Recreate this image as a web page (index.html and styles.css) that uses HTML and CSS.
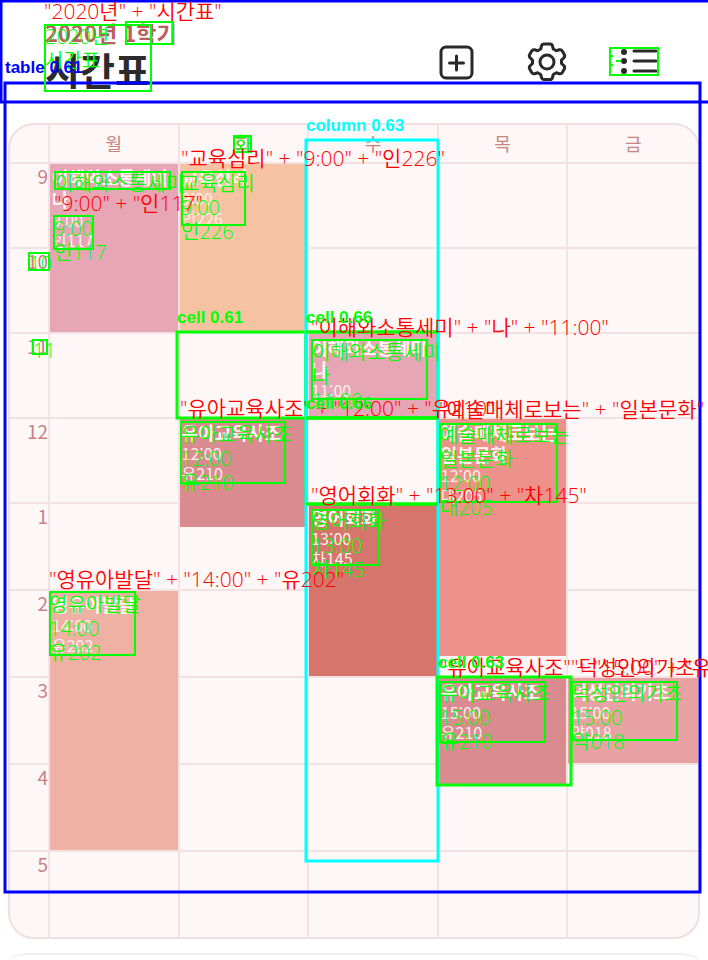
FILE: index.html
```html
<!DOCTYPE html>
<html lang="ko">
<head>
<meta charset="utf-8">
<meta name="viewport" content="width=device-width, initial-scale=1">
<title>시간표</title>
<link rel="stylesheet" href="styles.css">
</head>
<body>
<div class="page">
  <header class="header">
    <div class="heading">
      <p class="term">2020년 1학기</p>
      <h1 class="title">시간표</h1>
    </div>
    <nav class="actions" aria-label="메뉴">
      <button class="action" type="button" aria-label="추가">
        <svg viewBox="0 0 40 40"><rect x="5" y="5" width="31" height="31" rx="5"/><path d="M20.500 14v14M13.500 21h14"/></svg>
      </button>
      <button class="action" type="button" aria-label="설정">
        <svg viewBox="0 0 40 40"><path d="M17 2h6q2 0 2.500 2l.8 3 3 1.700 3-.9q2-.5 3 1.200l2 3.600q1 1.800-.5 3.200L34.500 18v3.500l2.300 2.200q1.500 1.400.5 3.200l-2 3.600q-1 1.700-3 1.200l-3-.9-3 1.700-.8 3q-.5 2-2.500 2h-6q-2 0-2.500-2l-.8-3-3-1.700-3 .9q-2 .5-3-1.200l-2-3.600q-1-1.800.5-3.200l2.300-2.200V18l-2.300-2.200q-1.500-1.400-.5-3.200l2-3.600q1-1.700 3-1.200l3 .9 3-1.700.8-3Q15 2 17 2Z"/><circle cx="20" cy="20" r="7"/></svg>
      </button>
      <button class="action" type="button" aria-label="목록">
        <svg viewBox="0 0 40 40"><path d="M16 9h22M16 19h22M16 29h22"/><g class="dots"><circle cx="6" cy="10" r="3"/><circle cx="6" cy="19" r="3"/><circle cx="6" cy="29" r="3"/></g></svg>
      </button>
    </nav>
  </header>

  <main class="content">
    <table class="timetable">
      <colgroup><col class="hours"><col><col><col><col><col></colgroup>
      <thead>
        <tr><td></td><th scope="col">월</th><th scope="col">화</th><th scope="col">수</th><th scope="col">목</th><th scope="col">금</th></tr>
      </thead>
      <tbody>
        <tr>
          <th scope="row">9</th>
          <td rowspan="2" class="pink"><div class="lesson"><b>이해와소통세미나</b><span>9:00</span><span>인117</span></div></td>
          <td rowspan="2" class="orange"><div class="lesson"><b>교육심리</b><span>9:00</span><span>인226</span></div></td>
          <td></td><td></td><td></td>
        </tr>
        <tr><th scope="row">10</th><td></td><td></td><td></td></tr>
        <tr>
          <th scope="row">11</th><td></td><td></td>
          <td class="pink"><div class="lesson"><b>이해와소통세미나</b><span>11:00</span></div></td>
          <td></td><td></td>
        </tr>
        <tr>
          <th scope="row">12</th><td></td>
          <td rowspan="2"><div class="lesson rose quarter"><b>유아교육사조</b><span>12:00</span><span>유210</span></div></td>
          <td></td>
          <td rowspan="3"><div class="lesson coral long"><b>예술매체로보는 일본문화</b><span>12:00</span><span>대205</span></div></td>
          <td></td>
        </tr>
        <tr class="tall">
          <th scope="row">1</th><td></td>
          <td rowspan="2" class="red"><div class="lesson"><b>영어회화</b><span>13:00</span><span>차145</span></div></td>
          <td></td>
        </tr>
        <tr class="tall">
          <th scope="row">2</th>
          <td rowspan="3" class="salmon"><div class="lesson"><b>영유아발달</b><span>14:00</span><span>유202</span></div></td>
          <td></td><td></td>
        </tr>
        <tr class="tall">
          <th scope="row">3</th><td></td><td></td>
          <td rowspan="2"><div class="lesson rose quarter"><b>유아교육사조</b><span>15:00</span><span>유210</span></div></td>
          <td class="blush"><div class="lesson"><b>덕성인의기초</b><span>15:00</span><span>약018</span></div></td>
        </tr>
        <tr class="tall"><th scope="row">4</th><td></td><td></td><td></td></tr>
        <tr><th scope="row">5</th><td></td><td></td><td></td><td></td><td></td></tr>
      </tbody>
    </table>
    <section class="next-card"></section>
  </main>

  <svg class="annotations" viewBox="0 0 708 960">
    <g class="region blue">
      <path d="M708 1H1v101h707"/>
      <rect x="5" y="83" width="695" height="809"/>
    </g>
    <g class="region green">
      <rect x="177" y="332" width="129" height="86"/>
      <rect x="306" y="332" width="132" height="86"/>
      <rect x="306" y="418" width="132" height="86"/>
    </g>
    <rect class="region cyan" x="306" y="140" width="132" height="721"/>
    <path class="region green" d="M306 332h132M306 418h132M306 504h132"/>
    <rect class="region green" x="437" y="677" width="134" height="108"/>

    <g class="word">
      <rect x="45" y="25" width="106" height="66"/>
      <rect x="126" y="22" width="47" height="22"/>
      <rect x="610" y="48" width="48" height="27"/>
      <path d="M611 56h2M611 65h2M616 61h5"/>
      <rect x="234" y="136" width="17" height="16"/>
      <rect x="55" y="172" width="115" height="17"/>
      <rect x="54" y="216" width="39" height="33"/>
      <rect x="182" y="172" width="63" height="53"/>
      <rect x="29" y="253" width="20" height="17"/>
      <rect x="33" y="340" width="14" height="14"/>
      <rect x="312" y="340" width="115" height="59"/>
      <rect x="181" y="422" width="104" height="61"/>
      <rect x="440" y="424" width="117" height="78"/>
      <rect x="312" y="510" width="67" height="55"/>
      <rect x="50" y="592" width="85" height="63"/>
      <rect x="440" y="682" width="105" height="60"/>
      <rect x="572" y="682" width="105" height="58"/>
    </g>

    <g class="read">
      <text x="45" y="44">2020년</text><text x="45" y="68">시간표</text>
      <text x="234" y="152">화</text>
      <text x="55" y="191">이해와소통세미</text>
      <text x="54" y="236">9:00</text><text x="54" y="260">인117</text>
      <text x="181" y="191">교육심리</text><text x="181" y="215">9:00</text><text x="181" y="239">인226</text>
      <text x="29" y="271">10</text><text x="33" y="358">11</text>
      <text x="312" y="360">이해와소통세미</text><text x="312" y="384">나</text><text x="312" y="408">11:00</text>
      <text x="181" y="442">유아교육사조</text><text x="181" y="466">12:00</text><text x="181" y="490">유210</text>
      <text x="440" y="443">예술매체로보는</text><text x="440" y="467">일본문화</text><text x="440" y="491">12:00</text><text x="440" y="515">대205</text>
      <text x="312" y="529">영어회화</text><text x="312" y="553">13:00</text><text x="312" y="577">차145</text>
      <text x="49" y="612">영유아발달</text><text x="49" y="636">14:00</text><text x="49" y="660">유202</text>
      <text x="440" y="701">유아교육사조</text><text x="440" y="725">15:00</text><text x="440" y="749">유210</text>
      <text x="572" y="701">덕성인의기초</text><text x="572" y="725">15:00</text><text x="572" y="749">약018</text>
    </g>

    <g class="joined">
      <text x="44" y="19">"2020년" + "시간표"</text>
      <text x="181" y="166">"교육심리" + "9:00" + "인226"</text>
      <text x="54" y="211">"9:00" + "인117"</text>
      <text x="311" y="335">"이해와소통세미" + "나" + "11:00"</text>
      <text x="180" y="416">"유아교육사조" + "12:00" + "유210"</text>
      <text x="439" y="417">"예술매체로보는" + "일본문화" + "12:00" + "대205"</text>
      <text x="311" y="503">"영어회화" + "13:00" + "차145"</text>
      <text x="49" y="587">"영유아발달" + "14:00" + "유202"</text>
      <text x="440" y="675">"유아교육사조" + "15:00" + "유210"</text>
      <text x="571" y="675">"덕성인의기초" + "15:00" + "약018"</text>
    </g>

    <g class="label">
      <text class="on-blue" x="5" y="73">table 0.61</text>
      <text class="on-cyan" x="306" y="131">column 0.63</text>
      <text x="177" y="323">cell 0.61</text>
      <text x="306" y="323">cell 0.66</text>
      <text x="306" y="409">cell 0.66</text>
      <text x="438" y="668">cell 0.63</text>
    </g>
  </svg>
</div>
</body>
</html>
```
FILE: styles.css
```css
* { box-sizing: border-box; }

body {
  margin: 0;
  background: #fff;
  font-family: "Noto Sans CJK KR", sans-serif;
}

.page {
  position: relative;
  display: flex;
  flex-direction: column;
  min-height: 100vh;
  overflow: hidden;
}

.header {
  display: flex;
  justify-content: space-between;
  align-items: flex-start;
  padding: 18px 50px 0 45px;
  height: 123px;
}

.term {
  margin: 0;
  color: #b9605f;
  font-size: 22px;
  font-weight: 700;
  line-height: 28px;
}

.title {
  margin: 0;
  color: #2b2b2d;
  font-size: 38px;
  font-weight: 700;
  line-height: 46px;
}

.actions {
  display: flex;
  gap: 51px;
  padding-top: 24px;
}

.action {
  width: 40px;
  height: 40px;
  padding: 0;
  border: 0;
  background: none;
}

.action svg {
  display: block;
  fill: none;
  stroke: #29292b;
  stroke-width: 3;
  stroke-linecap: round;
  stroke-linejoin: round;
}

.action .dots {
  fill: #29292b;
  stroke: none;
}

.content {
  display: flex;
  flex: 1;
  flex-direction: column;
  gap: 14px;
  padding: 0 8px;
}

.timetable {
  width: 100%;
  table-layout: fixed;
  border: 2px solid #f1dfe0;
  border-radius: 26px;
  border-spacing: 0;
  background: #fdf7f7;
  overflow: hidden;
}

.timetable .hours { width: 40px; }

.timetable th,
.timetable td {
  height: 85px;
  padding: 0;
  border-right: 2px solid #f3e2e3;
  border-bottom: 2px solid #f3e2e3;
  vertical-align: top;
}

.timetable th:last-child,
.timetable td:last-child { border-right: 0; }

.timetable tbody tr:last-child > * { border-bottom: 0; }

.timetable .tall > * { height: 87px; }

.timetable thead th,
.timetable thead td {
  height: 39px;
  color: #c78480;
  font-size: 18px;
  font-weight: 400;
  line-height: 36px;
}

.timetable tbody th {
  color: #c98185;
  font-size: 19px;
  font-weight: 400;
  line-height: 24px;
  text-align: right;
}

.timetable .pink { background: #e6a6b5; }
.timetable .orange { background: #f5c3a2; }
.timetable .red { background: #d6756b; }
.timetable .salmon { background: #efb1a4; }
.timetable .blush { background: #e8a2a4; }
.rose { background: #da8b8f; }
.coral { background: #ec928a; }

.lesson {
  display: flex;
  flex-direction: column;
  padding: 2px 0 0 2px;
  color: #fdeeee;
  font-size: 16px;
  line-height: 20px;
}

.lesson b {
  color: #fff5f5;
  font-size: 18px;
  line-height: 22px;
}

.quarter { height: 108px; }
.long { height: 237px; }

.next-card {
  height: 8px;
  border-top: 2px solid #efefef;
  border-radius: 24px 24px 0 0 / 8px 8px 0 0;
}

.annotations {
  position: absolute;
  top: 0;
  left: 0;
  width: 100%;
  pointer-events: none;
}

.region {
  fill: none;
  stroke-width: 3;
}

.blue { stroke: #00f; }
.green { stroke: #0f0; }
.cyan { stroke: #0ff; }

.word {
  fill: none;
  stroke: #0f0;
  stroke-width: 2;
}

.read,
.joined {
  font-family: "Open Sans", "Noto Sans CJK KR", sans-serif;
  font-size: 20px;
  font-weight: 350;
}

.read { fill: #0f0; }

.joined {
  fill: #f00;
  font-size: 21px;
}

.label {
  fill: #0f0;
  font-family: "Liberation Sans", sans-serif;
  font-size: 17px;
  font-weight: 700;
}

.label .on-blue { fill: #00f; }
.label .on-cyan { fill: #0ff; }
```
